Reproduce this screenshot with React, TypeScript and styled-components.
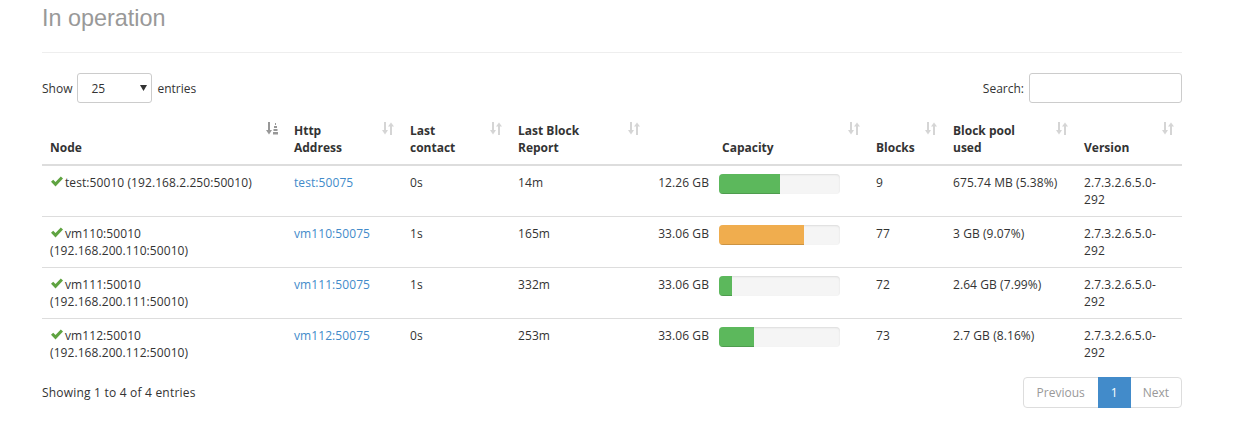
import React from "react";
import styled, { createGlobalStyle } from "styled-components";

const GlobalStyle = createGlobalStyle`
  html, body { margin: 0; padding: 0; background: #fff; }
  body {
    font-family: "Open Sans", "Liberation Sans", sans-serif;
    font-size: 12px;
    line-height: 17px;
    color: #333;
  }
  * { box-sizing: border-box; }
`;

const Page = styled.div`
  width: 1140px;
  margin-left: 42px;
`;

const PageHeader = styled.div`
  padding-top: 5px;
  padding-bottom: 21px;
  border-bottom: 1px solid #eee;
  margin-bottom: 20px;
`;

const Title = styled.h1`
  margin: 0;
  font-family: "Liberation Sans", Arial, sans-serif;
  font-size: 23.4px;
  line-height: 26px;
  font-weight: normal;
  color: #999;
`;

const Controls = styled.div`
  display: flex;
  justify-content: space-between;
  align-items: center;
  height: 30px;
`;

const ControlLabel = styled.label`
  display: flex;
  align-items: center;
  gap: 5px;
`;

const SelectWrap = styled.span`
  position: relative;
  display: inline-block;
  width: 75px;
  height: 30px;
`;

const Select = styled.select`
  appearance: none;
  -webkit-appearance: none;
  width: 100%;
  height: 100%;
  border: 1px solid #ccc;
  border-radius: 3px;
  padding: 0 0 0 13px;
  font: inherit;
  color: #333;
  background: #fff;
`;

const Caret = styled.svg`
  position: absolute;
  right: 5px;
  top: 12px;
  width: 7px;
  height: 6px;
  pointer-events: none;
`;

const SearchInput = styled.input`
  width: 153px;
  height: 30px;
  border: 1px solid #ccc;
  border-radius: 3px;
  padding: 5px 10px;
  font: inherit;
`;

const Table = styled.table`
  width: 1140px;
  margin-top: 11px;
  border-collapse: separate;
  border-spacing: 0;
  table-layout: fixed;
`;

const Th = styled.th<{ $indent?: number }>`
  position: relative;
  text-align: left;
  vertical-align: bottom;
  padding: 8px 30px 8px ${(p) => p.$indent ?? 8}px;
  font-weight: bold;
  border-bottom: 2px solid #ddd;
`;

const SortIcon = styled.svg<{ $active?: boolean }>`
  position: absolute;
  top: 8px;
  right: 8px;
  width: 12px;
  height: 13px;
  color: #333;
  opacity: ${(p) => (p.$active ? 0.5 : 0.2)};
`;

const Td = styled.td`
  padding: 8px;
  vertical-align: top;
  border-top: 1px solid #ddd;
  letter-spacing: 0.08px;
  tr:first-child > & {
    border-top: none;
  }
`;

const CheckIcon = styled.svg`
  width: 12px;
  height: 11px;
  margin: 0 2px 0 1px;
  color: #5fa341;
  vertical-align: baseline;
`;

const Link = styled.a`
  color: #428bca;
  text-decoration: none;
`;

const CapacityCell = styled.div`
  display: flex;
  align-items: flex-start;
  gap: 10px;
  padding-right: 20px;
`;

const CapacityText = styled.div`
  flex: 1;
  text-align: right;
  white-space: nowrap;
`;

const Progress = styled.div`
  width: 121px;
  height: 20px;
  background: #f5f5f5;
  border-radius: 4px;
  overflow: hidden;
  box-shadow: inset 0 1px 2px rgba(0, 0, 0, 0.1);
`;

const Bar = styled.div<{ $color: string }>`
  height: 100%;
  background: ${(p) => p.$color};
  box-shadow: inset 0 -1px 0 rgba(0, 0, 0, 0.15);
`;

const Footer = styled.div`
  display: flex;
  justify-content: space-between;
  align-items: center;
  margin-top: 8px;
`;

const Info = styled.div`
  letter-spacing: 0.2px;
`;

const Pager = styled.ul`
  display: flex;
  margin: 0;
  padding: 0;
  list-style: none;
`;

const PageBtn = styled.li<{ $active?: boolean; $disabled?: boolean }>`
  padding: 6px 12px;
  line-height: 17px;
  border: 1px solid ${(p) => (p.$active ? "#428bca" : "#ddd")};
  background: ${(p) => (p.$active ? "#428bca" : "#fff")};
  color: ${(p) => (p.$active ? "#fff" : p.$disabled ? "#999" : "#428bca")};
  margin-left: -1px;
  position: relative;
  z-index: ${(p) => (p.$active ? 2 : 1)};
  &:first-child {
    margin-left: 0;
    padding: 6px 13px;
    border-radius: 4px 0 0 4px;
  }
  &:last-child {
    border-radius: 0 4px 4px 0;
  }
`;

const Sort = ({ active }: { active?: boolean }) => (
  <SortIcon $active={active} viewBox="0 0 12 13" fill="currentColor">
    <rect x="2" y="0" width="2" height="9" />
    <polygon points="0,8 6,8 3,12.5" />
    {active ? (
      <>
        <rect x="9" y="1" width="1" height="2" />
        <rect x="8" y="4" width="3" height="2" />
        <rect x="7.5" y="7" width="4" height="2" />
        <rect x="7" y="10" width="5" height="2.5" />
      </>
    ) : (
      <>
        <polygon points="6,4.5 12,4.5 9,0.5" />
        <rect x="8" y="4" width="2" height="9" />
      </>
    )}
  </SortIcon>
);

const Check = () => (
  <CheckIcon viewBox="0 0 12 11" fill="currentColor">
    <polygon points="0,5.8 2.2,3.7 4.5,6 9.8,0.4 12,2.5 4.5,10.6" />
  </CheckIcon>
);

type Node = {
  name: string;
  addr: string;
  http: string;
  contact: string;
  report: string;
  capacity: string;
  pct: number;
  color: string;
  blocks: string;
  pool: string;
  version: string;
};

const GREEN = "#5cb85c";
const ORANGE = "#f0ad4e";

const nodes: Node[] = [
  { name: "test:50010", addr: "192.168.2.250:50010", http: "test:50075", contact: "0s", report: "14m", capacity: "12.26 GB", pct: 50.4, color: GREEN, blocks: "9", pool: "675.74 MB (5.38%)", version: "2.7.3.2.6.5.0-292" },
  { name: "vm110:50010", addr: "192.168.200.110:50010", http: "vm110:50075", contact: "1s", report: "165m", capacity: "33.06 GB", pct: 70.2, color: ORANGE, blocks: "77", pool: "3 GB (9.07%)", version: "2.7.3.2.6.5.0-292" },
  { name: "vm111:50010", addr: "192.168.200.111:50010", http: "vm111:50075", contact: "1s", report: "332m", capacity: "33.06 GB", pct: 10.7, color: GREEN, blocks: "72", pool: "2.64 GB (7.99%)", version: "2.7.3.2.6.5.0-292" },
  { name: "vm112:50010", addr: "192.168.200.112:50010", http: "vm112:50075", contact: "0s", report: "253m", capacity: "33.06 GB", pct: 28.9, color: GREEN, blocks: "73", pool: "2.7 GB (8.16%)", version: "2.7.3.2.6.5.0-292" },
];

const columns: { lines: string[]; width: number; indent?: number; active?: boolean }[] = [
  { lines: ["Node"], width: 244, active: true },
  { lines: ["Http", "Address"], width: 116 },
  { lines: ["Last", "contact"], width: 108 },
  { lines: ["Last Block", "Report"], width: 138 },
  { lines: ["Capacity"], width: 220, indent: 74 },
  { lines: ["Blocks"], width: 77 },
  { lines: ["Block pool", "used"], width: 131 },
  { lines: ["Version"], width: 106 },
];

export default function App() {
  return (
    <>
      <GlobalStyle />
      <Page>
        <PageHeader>
          <Title>In operation</Title>
        </PageHeader>
        <Controls>
          <ControlLabel>
            Show
            <SelectWrap>
              <Select defaultValue="25">
                <option value="10">10</option>
                <option value="25">25</option>
                <option value="50">50</option>
                <option value="100">100</option>
              </Select>
              <Caret viewBox="0 0 7 6" fill="#333">
                <polygon points="0,0 7,0 3.5,6" />
              </Caret>
            </SelectWrap>
            entries
          </ControlLabel>
          <ControlLabel>
            Search:
            <SearchInput type="search" />
          </ControlLabel>
        </Controls>
        <Table>
          <colgroup>
            {columns.map((c, i) => (
              <col key={i} style={{ width: c.width }} />
            ))}
          </colgroup>
          <thead>
            <tr>
              {columns.map((c, i) => (
                <Th key={i} $indent={c.indent}>
                  {c.lines.map((l, j) => (
                    <React.Fragment key={j}>
                      {j > 0 && <br />}
                      {l}
                    </React.Fragment>
                  ))}
                  <Sort active={c.active} />
                </Th>
              ))}
            </tr>
          </thead>
          <tbody>
            {nodes.map((n) => (
              <tr key={n.name}>
                <Td>
                  <Check />
                  {n.name} ({n.addr})
                </Td>
                <Td>
                  <Link href="#">{n.http}</Link>
                </Td>
                <Td>{n.contact}</Td>
                <Td>{n.report}</Td>
                <Td>
                  <CapacityCell>
                    <CapacityText>{n.capacity}</CapacityText>
                    <Progress>
                      <Bar $color={n.color} style={{ width: `${n.pct}%` }} />
                    </Progress>
                  </CapacityCell>
                </Td>
                <Td>{n.blocks}</Td>
                <Td>{n.pool}</Td>
                <Td>{n.version}</Td>
              </tr>
            ))}
          </tbody>
        </Table>
        <Footer>
          <Info>Showing 1 to 4 of 4 entries</Info>
          <Pager>
            <PageBtn $disabled>Previous</PageBtn>
            <PageBtn $active>1</PageBtn>
            <PageBtn $disabled>Next</PageBtn>
          </Pager>
        </Footer>
      </Page>
    </>
  );
}
